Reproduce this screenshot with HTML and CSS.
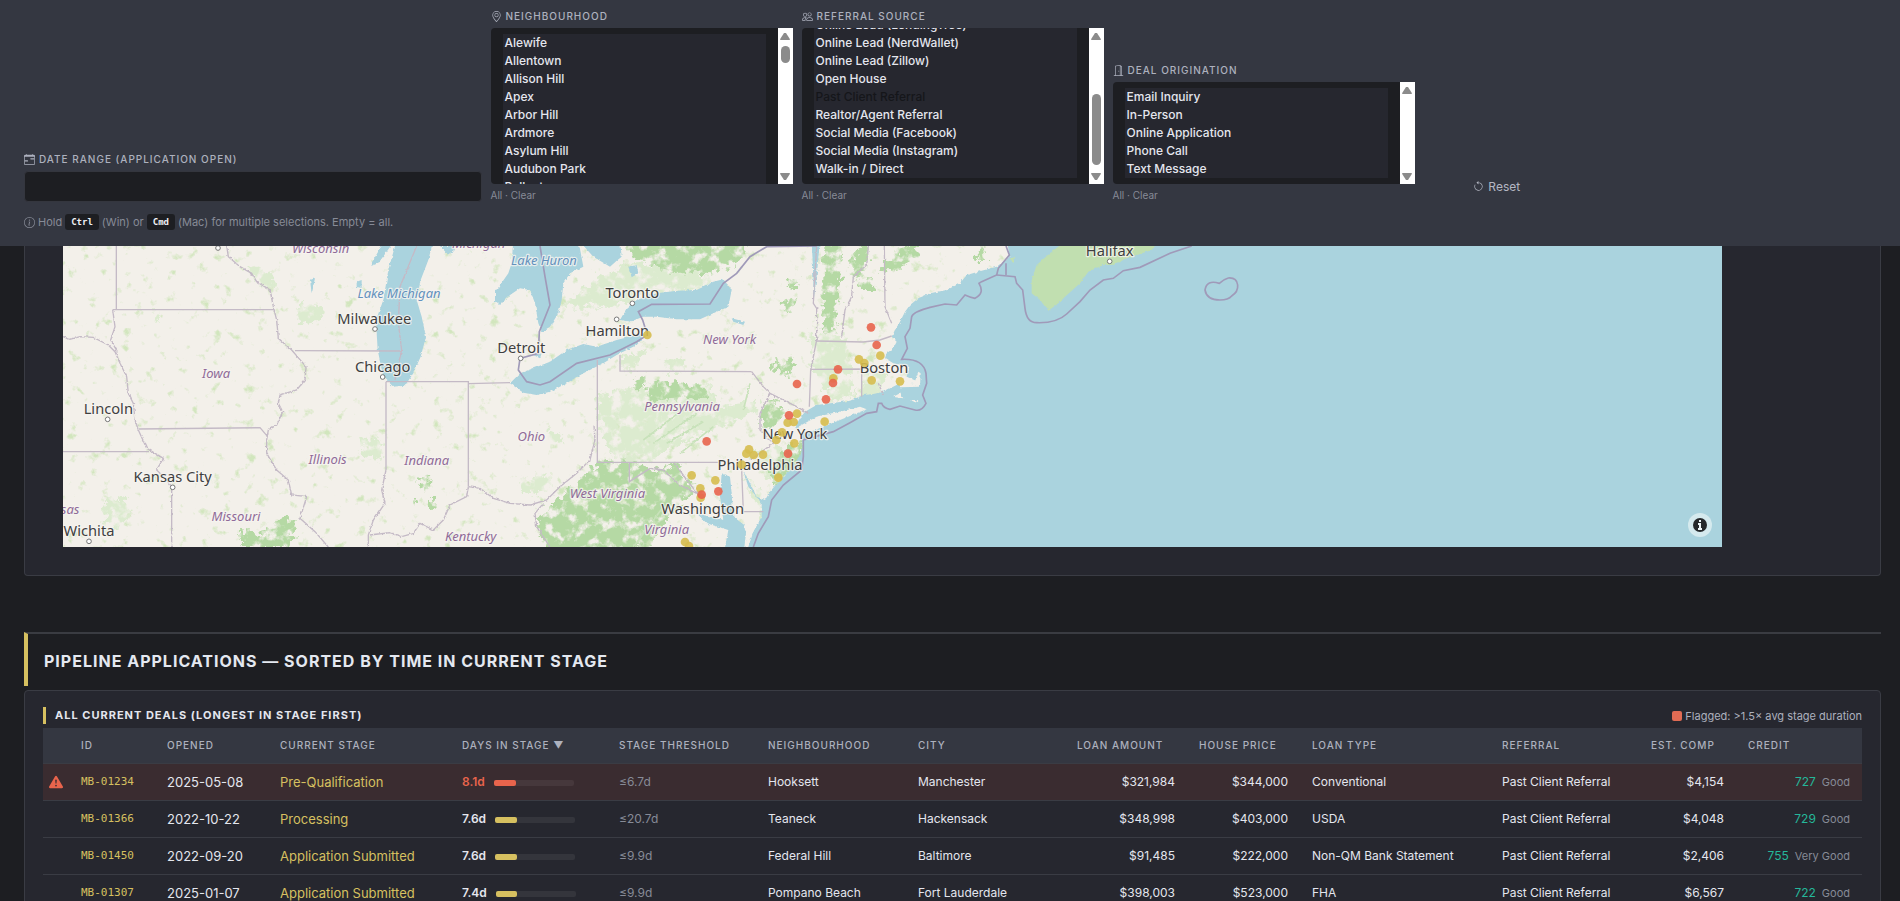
FILE: index.html
```html
<!DOCTYPE html>
<html lang="en">
<head>
  <meta charset="UTF-8">
  <meta name="viewport" content="width=device-width, initial-scale=1.0">
  <title>Mortgage Pipeline Dashboard</title>
  <link rel="stylesheet" href="styles.css">
</head>
<body>

  <!-- Filters -->
  <header class="filter-bar">
    <div class="filter-grid">
      <div class="field field-date">
        <label for="date-range">
          <svg class="icon" viewBox="0 0 16 16"><path d="M9 7a1 1 0 0 1 1-1h5v2h-5a1 1 0 0 1-1-1M1 9h4a1 1 0 0 1 0 2H1z"/><path d="M3.500 0a.5.5 0 0 1 .5.5V1h8V.5a.5.5 0 0 1 1 0V1h1a2 2 0 0 1 2 2v11a2 2 0 0 1-2 2H2a2 2 0 0 1-2-2V3a2 2 0 0 1 2-2h1V.5a.5.5 0 0 1 .5-.5M1 4v10a1 1 0 0 0 1 1h12a1 1 0 0 0 1-1V4z"/></svg>
          Date range (application open)
        </label>
        <input type="text" id="date-range">
      </div>

      <div class="field">
        <label for="neighbourhood">
          <svg class="icon" viewBox="0 0 16 16"><path d="M12.166 8.94c-.524 1.062-1.234 2.12-1.96 3.07A32 32 0 0 1 8 14.58a32 32 0 0 1-2.206-2.57c-.726-.95-1.436-2.008-1.96-3.07C3.304 7.867 3 6.862 3 6a5 5 0 0 1 10 0c0 .862-.305 1.867-.834 2.94M8 16s6-5.686 6-10A6 6 0 0 0 2 6c0 4.314 6 10 6 10"/><path d="M8 8a2 2 0 1 1 0-4 2 2 0 0 1 0 4m0 1a3 3 0 1 0 0-6 3 3 0 0 0 0 6"/></svg>
          Neighbourhood
        </label>
        <div class="list-box">
          <select id="neighbourhood" class="list tall" multiple></select>
          <span class="scrollbar"><i class="up"></i><i class="thumb thumb-top"></i><i class="down"></i></span>
        </div>
        <div class="links"><a href="#">All</a> · <a href="#">Clear</a></div>
      </div>

      <div class="field">
        <label for="referral">
          <svg class="icon" viewBox="0 0 16 16"><path d="M15 14s1 0 1-1-1-4-5-4-5 3-5 4 1 1 1 1zm-7.978-1L7 12.996c.001-.264.167-1.03.76-1.72C8.312 10.629 9.282 10 11 10c1.717 0 2.687.63 3.24 1.276.593.69.758 1.457.76 1.72l-.008.002-.014.002zM11 7a2 2 0 1 0 0-4 2 2 0 0 0 0 4m3-2a3 3 0 1 1-6 0 3 3 0 0 1 6 0M6.936 9.28a6 6 0 0 0-1.23-.247A7 7 0 0 0 5 9c-4 0-5 3-5 4q0 1 1 1h4.216A2.24 2.24 0 0 1 5 13c0-1.01.377-2.042 1.09-2.904.243-.294.526-.569.846-.816M4.920 10A5.500 5.500 0 0 0 4 13H1c0-.26.164-1.03.76-1.724.545-.636 1.492-1.256 3.160-1.275ZM1.500 5.500a3 3 0 1 1 6 0 3 3 0 0 1-6 0m3-2a2 2 0 1 0 0 4 2 2 0 0 0 0-4"/></svg>
          Referral source
        </label>
        <div class="list-box">
          <select id="referral" class="list tall" multiple></select>
          <span class="scrollbar"><i class="up"></i><i class="thumb thumb-bottom"></i><i class="down"></i></span>
        </div>
        <div class="links"><a href="#">All</a> · <a href="#">Clear</a></div>
      </div>

      <div class="field">
        <label for="origination">
          <svg class="icon" viewBox="0 0 16 16"><path d="M8.500 10c-.276 0-.5-.448-.5-1s.224-1 .5-1 .5.448.5 1-.224 1-.5 1"/><path d="M10.828.122A.5.5 0 0 1 11 .5V1h.5A1.500 1.500 0 0 1 13 2.500V15h1.500a.5.5 0 0 1 0 1h-13a.5.5 0 0 1 0-1H3V1.500a.5.5 0 0 1 .43-.495l7-1a.5.5 0 0 1 .398.117M11.500 2H11v13h1V2.500a.5.5 0 0 0-.5-.5M4 1.934V15h6V1.077z"/></svg>
          Deal origination
        </label>
        <div class="list-box">
          <select id="origination" class="list short" multiple></select>
          <span class="scrollbar"><i class="up"></i><i class="down"></i></span>
        </div>
        <div class="links"><a href="#">All</a> · <a href="#">Clear</a></div>
      </div>

      <button class="reset" type="button">
        <svg class="icon" viewBox="0 0 16 16"><path d="M8 3a5 5 0 1 1-4.546 2.914.5.5 0 0 0-.908-.417A6 6 0 1 0 8 2z"/><path d="M8 4.466V.534a.25.25 0 0 0-.41-.192L5.230 2.308a.25.25 0 0 0 0 .384l2.360 1.966A.25.25 0 0 0 8 4.466"/></svg>
        Reset
      </button>
    </div>
    <p class="hint">
      <svg class="icon" viewBox="0 0 16 16"><path d="M8 15A7 7 0 1 1 8 1a7 7 0 0 1 0 14m0 1A8 8 0 1 0 8 0a8 8 0 0 0 0 16"/><path d="m8.930 6.588-2.290.287-.082.38.45.083c.294.07.352.176.288.469l-.738 3.468c-.194.897.105 1.319.808 1.319.545 0 1.178-.252 1.465-.598l.088-.416c-.2.176-.492.246-.686.246-.275 0-.375-.193-.304-.533zM9 4.500a1 1 0 1 1-2 0 1 1 0 0 1 2 0"/></svg>
      Hold <kbd>Ctrl</kbd> (Win) or <kbd>Cmd</kbd> (Mac) for multiple selections. Empty = all.
    </p>
  </header>

  <main class="content">

    <!-- Deal map -->
    <section class="card map-card">
      <div class="map">
        <svg class="map-canvas" viewBox="189 18 4977 903" preserveAspectRatio="xMidYMid slice">
          <defs>
            <filter id="rough" x="-2%" y="-2%" width="104%" height="104%">
              <feTurbulence type="fractalNoise" baseFrequency=".09" numOctaves="3" seed="4"/>
              <feDisplacementMap in="SourceGraphic" scale="9" xChannelSelector="R" yChannelSelector="G"/>
            </filter>
            <filter id="woods" x="-5%" y="-5%" width="110%" height="110%" color-interpolation-filters="sRGB">
              <feTurbulence type="fractalNoise" baseFrequency=".05" numOctaves="4" seed="9"/>
              <feDisplacementMap in="SourceGraphic" scale="50" xChannelSelector="R" yChannelSelector="G" result="shape"/>
              <feTurbulence type="fractalNoise" baseFrequency=".03" numOctaves="4" seed="14"/>
              <feColorMatrix values="0 0 0 0 1  0 0 0 0 1  0 0 0 0 1  5 0 0 0 -1.500" result="patches"/>
              <feComposite in="shape" in2="patches" operator="in"/>
            </filter>
            <filter id="speckle" x="0" y="0" width="100%" height="100%" color-interpolation-filters="sRGB">
              <feTurbulence type="fractalNoise" baseFrequency=".03" numOctaves="4" seed="21"/>
              <feColorMatrix values="0 0 0 0 .82  0 0 0 0 .90  0 0 0 0 .74  5 0 0 0 -3.150"/>
            </filter>
          </defs>

          <rect class="land" x="189" y="18" width="4977" height="903"/>
          <rect class="speckles" x="189" y="18" width="2900" height="903" filter="url(#speckle)"/>

          <g class="forest light" filter="url(#woods)">
            <path d="M740,90 780,80 825,120 820,150 780,140Z M890,200 960,190 970,240 900,250Z M320,770 380,780 390,830 350,860 310,850Z M450,210 480,210 470,250Z M1080,590 1140,600 1150,660 1090,650Z"/>
            <path d="M1690,200 1800,110 1880,70 2060,90 2160,120 2100,150 1950,160 1850,200Z M1860,350 1940,330 1900,390 1870,395Z M1990,360 2050,350 2050,395 2000,395Z"/>
            <path d="M1560,720 1640,700 1660,745 1570,760Z M1640,570 1680,580 1690,610 1650,610Z M1790,460 2130,430 2160,500 2280,480 2260,520 2060,600 1900,690 1830,640 1800,560Z"/>
            <path d="M2430,280 2540,290 2560,470 2500,480 2440,400Z M2580,390 2660,400 2640,470 2590,470Z M2250,640 2340,620 2370,690 2300,720Z M2230,700 2290,760 2310,900 2280,850Z"/>
          </g>
          <g class="forest" filter="url(#woods)">
            <path d="M720,870 790,880 850,830 890,850 870,921 720,921Z M1255,720 1295,710 1290,755 1260,750Z M1290,780 1310,780 1310,810 1290,815Z M1240,780 1250,780 1245,800Z"/>
            <path d="M1840,-20 2250,-20 2220,60 2130,100 2010,95 1900,50Z"/>
            <path d="M1900,420 1935,410 1930,450 1905,450Z M1940,430 2010,425 2110,440 2130,475 2050,470 1950,485Z"/>
            <path d="M1615,830 1720,740 1800,660 1890,665 1960,690 2040,670 2070,735 2010,790 1940,880 1880,960 1650,960 1610,860Z"/>
            <path d="M1960,840 2040,760 2070,720 2080,760 2010,830 1920,960 1890,960Z"/>
            <path d="M2470,-10 2530,-10 2520,120 2500,290 2465,280 2470,150Z M2555,50 2600,0 2610,60 2570,120 2550,110Z M2575,120 2620,110 2620,150 2580,150Z M2640,80 2740,0 2760,30 2700,90 2650,95Z M2355,115 2395,110 2390,150 2360,140Z M2350,180 2385,170 2370,215 2345,195Z M2320,370 2380,360 2375,400 2320,395Z M2290,500 2330,470 2350,530 2300,580 2280,550Z M2925,30 2950,18 2955,60 2930,60Z M2340,640 2420,590 2400,680 2330,740 2310,710Z"/>
          </g>
          <g class="ridge" filter="url(#rough)">
            <path d="M1930,600 2060,500 M1960,610 2090,520 M2000,610 2110,545 M2040,640 2140,560 M1990,800 1900,921 M2250,430 2230,510"/>
          </g>

          <g class="water" filter="url(#rough)">
            <path d="M1190,0 1165,90 1150,180 1128,240 1133,330 1150,410 1180,440 1215,437 1240,400 1262,350 1278,290 1265,230 1250,180 1262,120 1285,60 1300,0Z"/>
            <path d="M1155,0 1120,60 1113,78 1135,70 1185,0Z M1320,18 1345,45 1365,30 1360,18Z M1485,150 1505,145 1505,190 1485,185Z M1070,125 1085,120 1085,145 1070,140Z M930,120 945,115 935,160Z"/>
            <path d="M1540,0 1535,70 1525,100 1490,150 1485,180 1500,195 1530,165 1560,145 1590,150 1605,190 1615,250 1625,275 1650,260 1675,220 1685,180 1690,130 1710,100 1750,80 1735,0Z"/>
            <path d="M1735,0 1780,50 1830,80 1850,62 1865,50 1860,0Z M1885,80 1910,75 1915,100 1895,112Z M1600,345 1625,340 1620,355Z"/>
            <path d="M1530,430 1560,400 1600,385 1650,365 1700,330 1750,312 1790,320 1850,300 1910,285 1940,282 1910,315 1850,345 1810,370 1750,400 1700,430 1650,455 1610,465 1570,458Z"/>
            <path d="M1860,240 1880,205 1910,180 1970,160 2030,152 2090,150 2140,125 2170,118 2195,150 2185,200 2150,215 2100,238 2030,238 1970,230 1930,230 1890,245Z"/>
            <path d="M2435,0 2460,0 2450,110 2440,190 2440,110Z M2195,235 2235,245 2230,255 2200,245Z"/>
            <path d="M5230,-10 3020,-10 3028,50 2990,80 2945,92 2900,105 2880,130 2840,150 2790,160 2755,175 2730,195 2715,215 2700,245 2685,270 2675,290 2690,305 2680,325 2660,340 2655,355 2680,370 2725,380 2720,410 2755,425 2750,432 2700,430 2650,455 2620,462 2590,465 2550,482 2450,495 2415,515 2400,535 2385,560 2405,590 2408,620 2400,650 2370,690 2335,725 2310,755 2295,780 2270,770 2240,710 2230,695 2245,740 2285,790 2285,830 2262,870 2235,950 5230,950Z"/>
            <path d="M2165,700 2190,710 2195,760 2200,830 2240,860 2230,950 2170,950 2185,870 2120,850 2090,820 2170,840 2160,770Z"/>
          </g>

          <g class="land" filter="url(#rough)">
            <path d="M2395,560 2450,530 2520,515 2580,500 2600,508 2520,540 2440,572 2400,580Z"/>
            <path d="M2690,415 2740,432 2755,395 2762,400 2760,440 2700,442Z M2680,470 2700,460 2710,475Z M2730,480 2755,480 2750,488Z"/>
            <path d="M2225,720 2260,780 2280,800 2275,850 2250,890 2235,870 2225,800Z"/>
          </g>
          <path class="scotia" filter="url(#rough)" d="M3200,0 3150,40 3110,75 3095,120 3095,160 3120,180 3145,212 3175,190 3195,170 3240,130 3265,95 3310,75 3340,75 3380,55 3455,30 3480,0Z M3030,55 3045,50 3040,70Z"/>

          <!-- state lines -->
          <g class="state-line">
            <path d="M349,18V208 M338,209H822 M415,567 780,563 803,590 M189,635H447 M885,332 1200,333 M1158,425H1405V740 M1158,425V690 M1405,431 1530,428 M1792,360V667H2155 M1860,345V393L2255,395 M2432,390 2428,500 M2432,388 2585,387V470 M2450,303 2590,306 2640,300 2675,288 M1888,667V725L1950,685 M2225,690 2230,815H2290"/>
            <path filter="url(#rough)" d="M338,209 345,260 332,300 352,335 M189,290 210,298 240,290 280,292 325,315 345,335 360,370 380,410 385,460 400,490 405,540 415,570 440,625 490,655 470,690 500,720 515,740V921"/>
            <path filter="url(#rough)" d="M680,18 685,50 720,80 755,100 770,125 810,150 820,200 830,240 835,295 875,330 918,380 915,420 890,450 840,465 835,490 848,515 830,555 805,570 800,600 800,640 830,690 865,720 875,765 920,770 900,835 945,875 985,921"/>
            <path filter="url(#rough)" d="M1158,690 1145,750 1155,790 1120,840 1105,885V921 M1110,885 1170,878 1205,890 1240,880 1260,850 1300,870 1330,840 1350,795 1400,770 1405,740 1440,745 1480,775 1530,790 1590,795 1640,780 1680,740 1730,700 1770,660 1785,600 1782,560 M1630,790 1605,820 1610,860 1650,921"/>
            <path filter="url(#rough)" d="M2255,395 2290,440 2310,460 2280,520 2280,570 2320,610 2250,660 M2310,460 2390,500 2425,520 M2450,18 2445,100 2440,190 2450,205V300L2432,390 M2605,18 2600,75 2560,110 2555,170 2535,210 2525,290 M2653,18 2655,200 2675,250 M2635,430 2650,465 M1950,685 1990,690 2040,735 2090,760 M2025,670 2060,720 2100,770 M1250,18 1200,140 1195,250 1205,330 1185,420"/>
          </g>

          <!-- national border and territorial waters -->
          <g class="sea-line">
            <path d="M1620,18 1635,110 1650,195 1618,275 1615,340 1560,355 1555,390 1580,425 1620,435 1650,425 1730,370 1830,345 1910,305 1942,285 1928,240 1915,215 1955,193 2130,192 2170,130 2210,100 2250,50 2300,20 2450,18"/>
            <path d="M3018,18 3028,45 2995,85 2990,105 2945,125 2937,130Q2955,160 2925,175 2910,172 2895,165L2870,195 2835,192 2790,202Q2740,215 2735,230L2730,265 2715,290 2722,325 2705,358Q2770,355 2778,400 L2780,430 2768,465 2778,490Q2765,515 2745,510L2700,498 2670,508Q2650,505 2645,490L2635,490 2630,515 2600,520 2550,548 2500,575 2410,600V650L2405,690 2350,735 2315,780 2305,830 2275,880 2260,921"/>
            <path d="M2990,105 3045,110 3050,130 3068,150 3075,205Q3080,248 3110,248 3170,250 3200,222L3240,185 3270,150 3310,120 3340,115 3370,92 3420,82 3510,40 3575,18 M3018,70V105"/>
            <path d="M3658,130Q3620,118 3615,150 3620,180 3660,180 3685,180 3695,168 3715,155 3713,135 3710,112 3685,114 3670,118 3658,130Z"/>
          </g>

          <g class="town">
            <circle cx="654" cy="24" r="7"/><circle cx="1125" cy="267" r="7"/><circle cx="1148" cy="411" r="7"/><circle cx="323" cy="538" r="7"/><circle cx="518" cy="742" r="7"/><circle cx="267" cy="904" r="7"/><circle cx="1562" cy="355" r="7"/><circle cx="1897" cy="190" r="7"/><circle cx="1850" cy="238" r="7"/><circle cx="3329" cy="64" r="7"/>
          </g>

          <g class="region">
            <text x="962" y="39">Wisconsin</text>
            <text x="1436" y="24">Michigan</text>
            <text x="648" y="414">Iowa</text>
            <text x="983" y="673">Illinois</text>
            <text x="1280" y="674">Indiana</text>
            <text x="708" y="843">Missouri</text>
            <text x="177" y="822">Kansas</text>
            <text x="1412" y="902">Kentucky</text>
            <text x="1594" y="603">Ohio</text>
            <text x="1822" y="775">West Virginia</text>
            <text x="2000" y="881">Virginia</text>
            <text x="2046" y="514">Pennsylvania</text>
            <text x="2189" y="311">New York</text>
          </g>
          <g class="region lake">
            <text x="1197" y="174">Lake Michigan</text>
            <text x="1632" y="75">Lake Huron</text>
          </g>
          <g class="city">
            <text x="1123" y="251">Milwaukee</text>
            <text x="1148" y="395">Chicago</text>
            <text x="325" y="523">Lincoln</text>
            <text x="518" y="725">Kansas City</text>
            <text x="267" y="888">Wichita</text>
            <text x="1564" y="338">Detroit</text>
            <text x="1897" y="174">Toronto</text>
            <text x="1852" y="287">Hamilton</text>
            <text x="2652" y="398">Boston</text>
            <text x="2385" y="597">New York</text>
            <text x="2280" y="690">Philadelphia</text>
            <text x="2108" y="822">Washington</text>
            <text x="3329" y="48">Halifax</text>
          </g>

          <g id="deal-dots"></g>
        </svg>
        <button class="attribution" type="button" aria-label="Map attribution">
          <svg viewBox="0 0 24 24"><circle cx="12" cy="12" r="7"/><path d="M12 7v2M10 11h2v5M10 16h4"/></svg>
        </button>
      </div>
    </section>

    <h2 class="section-title">Pipeline applications — sorted by time in current stage</h2>

    <!-- Deals table -->
    <section class="card table-card">
      <div class="card-head">
        <h3>All current deals (longest in stage first)</h3>
        <span class="legend"><i class="swatch"></i>Flagged: &gt;1.5× avg stage duration</span>
      </div>
      <table class="deals">
        <colgroup>
          <col class="c-flag"><col class="c-id"><col class="c-opened"><col class="c-stage"><col class="c-days"><col class="c-limit"><col class="c-hood"><col class="c-city"><col class="c-loan"><col class="c-price"><col class="c-type"><col class="c-ref"><col class="c-comp"><col class="c-credit">
        </colgroup>
        <thead>
          <tr>
            <th></th>
            <th>ID</th>
            <th>Opened</th>
            <th>Current stage</th>
            <th>Days in stage ▼</th>
            <th>Stage threshold</th>
            <th>Neighbourhood</th>
            <th>City</th>
            <th>Loan amount</th>
            <th>House price</th>
            <th>Loan type</th>
            <th>Referral</th>
            <th>Est. comp</th>
            <th>Credit</th>
          </tr>
        </thead>
        <tbody id="deal-rows"></tbody>
      </table>
    </section>
  </main>

  <script src="script.js"></script>
</body>
</html>
```
FILE: styles.css
```css
* {
  box-sizing: border-box;
}

body {
  height: 100vh;
  margin: 0;
  overflow: hidden;
  background-color: #1d1e22;
  color: #e4e6ee;
  font-family: Inter, sans-serif;
  font-size: 12px;
}

a {
  color: inherit;
  text-decoration: none;
}

.icon {
  width: 11px;
  height: 11px;
  fill: currentColor;
  flex: none;
}

/* Filters */
.filter-bar {
  padding: 8px 19px 14px 24px;
  background-color: #343741;
}

.filter-grid {
  display: grid;
  grid-template-columns: repeat(12, 1fr);
  gap: 9px;
  align-items: end;
}

.field {
  grid-column: span 2;
  min-width: 0;
}

.field-date {
  grid-column: span 3;
}

.field label {
  display: flex;
  align-items: center;
  gap: 4px;
  height: 16px;
  margin-bottom: 4px;
  color: #adb1be;
  font-size: 10px;
  font-weight: 500;
  letter-spacing: 1px;
  text-transform: uppercase;
}

.field input {
  display: block;
  width: 100%;
  height: 31px;
  border: 1px solid #34363e;
  border-radius: 4px;
  background-color: #1d1e22;
  color: #e4e6ee;
}

.list-box {
  position: relative;
}

.list {
  display: block;
  width: 100%;
  padding: 6px 27px 6px 12px;
  border: 0;
  border-radius: 4px 0 0 4px;
  outline: 0;
  background-color: #1d1e22;
  color: #e4e6ee;
  font-family: inherit;
  font-size: 12px;
  overflow-y: scroll;
  scrollbar-width: none;
}

.tall {
  height: 156px;
}

.short {
  height: 102px;
}

.list option {
  height: 18px;
  min-height: 18px;
  padding: 1px 2px 0;
  background-color: #26272f;
  font-weight: 500;
  line-height: 18px;
}

.list option:checked {
  background: #26272f linear-gradient(#26272f, #26272f);
  color: #15161a;
}

/* scrollbar laid over the right edge of a list */
.scrollbar {
  position: absolute;
  top: 0;
  right: 0;
  bottom: 0;
  display: flex;
  flex-direction: column;
  align-items: center;
  width: 15px;
  padding: 5px 0 4px;
  background-color: #fff;
  pointer-events: none;
}

.up,
.down {
  width: 10px;
  height: 7px;
  background-color: #8b8b8b;
  clip-path: polygon(40% 0, 60% 0, 100% 90%, 95% 100%, 5% 100%, 0 90%);
}

.down {
  margin-top: auto;
  transform: rotate(180deg);
}

.thumb {
  width: 9px;
  border-radius: 5px;
  background-color: #8b8b8b;
}

.thumb-top {
  height: 17px;
  margin-top: 6px;
}

.thumb-bottom {
  height: 71px;
  margin: auto 0 8px;
}

.thumb-bottom + .down {
  margin-top: 0;
}

.links {
  margin-top: 4px;
  color: #878b97;
  font-size: 10px;
  line-height: 14px;
}

.reset {
  display: flex;
  align-items: center;
  justify-content: center;
  gap: 4px;
  height: 31px;
  padding: 0;
  border: 0;
  background: none;
  color: #b4b7c3;
  font-family: inherit;
  font-size: 12px;
  cursor: pointer;
}

.hint {
  display: flex;
  align-items: center;
  gap: 3px;
  height: 20px;
  margin: 10px 0 0;
  color: #878b97;
  font-size: 11px;
}

kbd {
  padding: 0 6px;
  border-radius: 3px;
  background-color: #1d1e22;
  color: #f0f1f5;
  font-family: "DejaVu Sans Mono", monospace;
  font-size: 9px;
  font-weight: bold;
  line-height: 16px;
}

/* Cards */
.content {
  padding: 0 19px 0 24px;
}

.card {
  border: 1px solid #3a3c44;
  border-radius: 4px;
  background-color: #26272f;
}

.map-card {
  padding: 0 158px 28px 38px;
  border-top: 0;
  border-radius: 0 0 4px 4px;
}

/* Map */
.map {
  position: relative;
}

.map-canvas {
  display: block;
  width: 100%;
  height: 301px;
  overflow: hidden;
}

.land {
  fill: #f3f0ea;
}

.forest {
  fill: #b5d9a4;
}

.light {
  fill: #dcebcf;
}

.ridge {
  fill: none;
  stroke: #c8e2ba;
  stroke-width: 5;
}

.water {
  fill: #aad3de;
}

.scotia {
  fill: #c1dfb0;
}

.state-line {
  fill: none;
  stroke: #c4bac6;
  stroke-width: 4;
}

.sea-line {
  fill: none;
  stroke: #a09ab9;
  stroke-width: 5;
}

.town {
  fill: #fff;
  stroke: #777;
  stroke-width: 3;
}

.map text {
  font-family: "Noto Sans", sans-serif;
  text-anchor: middle;
  paint-order: stroke;
  stroke: #f7f5f1;
  stroke-opacity: 0.8;
  stroke-width: 7;
  stroke-linejoin: round;
}

.region text {
  fill: #8f6b98;
  font-size: 39px;
  font-style: italic;
}

.lake text {
  fill: #6391bd;
}

.city text {
  fill: #3f3f3f;
  font-size: 44px;
}

.dot {
  fill: #d6bd4f;
  fill-opacity: 0.9;
}

.dot.flagged {
  fill: #e8644c;
}

.attribution {
  position: absolute;
  right: 10px;
  bottom: 10px;
  width: 24px;
  height: 24px;
  padding: 0;
  border: 0;
  border-radius: 12px;
  background-color: #d5eaee;
}

.attribution svg {
  display: block;
  fill: #25282a;
}

.attribution path {
  fill: none;
  stroke: #eef6f8;
  stroke-width: 2;
}

/* Section heading */
.section-title {
  height: 54px;
  margin: 56px 0 4px;
  padding-left: 16px;
  border-top: 2px solid #3a3c42;
  border-left: 4px solid #d6c060;
  color: #e4e8f0;
  font-size: 16px;
  font-weight: 700;
  letter-spacing: 1px;
  line-height: 54px;
  text-transform: uppercase;
  white-space: nowrap;
}

/* Deals table */
.table-card {
  padding: 16px 18px;
}

.card-head {
  display: flex;
  align-items: center;
  justify-content: space-between;
  height: 17px;
  margin-bottom: 4px;
}

.card-head h3 {
  margin: 0;
  padding-left: 9px;
  border-left: 3px solid #d6c060;
  font-size: 11px;
  font-weight: 700;
  letter-spacing: 1px;
  line-height: 17px;
  text-transform: uppercase;
}

.legend {
  display: flex;
  align-items: center;
  gap: 3px;
  color: #adb1be;
  font-size: 11px;
  line-height: 16px;
}

.swatch {
  width: 10px;
  height: 10px;
  border-radius: 2px;
  background-color: #e06b54;
}

.deals {
  width: 100%;
  table-layout: fixed;
  border-collapse: collapse;
}

.c-flag { width: 26px; }
.c-id { width: 86px; }
.c-opened { width: 113px; }
.c-stage { width: 182px; }
.c-days { width: 157px; }
.c-limit { width: 149px; }
.c-hood { width: 150px; }
.c-city { width: 159px; }
.c-loan { width: 122px; }
.c-price { width: 113px; }
.c-type { width: 190px; }
.c-ref { width: 149px; }
.c-comp { width: 97px; }
.c-credit { width: 126px; }

.deals th,
.deals td {
  height: 37px;
  padding: 0 12px;
  border-bottom: 1px solid #3a3c44;
  text-align: left;
  white-space: nowrap;
}

.deals th {
  height: 35px;
  background-color: #343741;
  color: #adb1be;
  font-size: 10px;
  font-weight: 500;
  letter-spacing: 1px;
  text-transform: uppercase;
}

.deals tr.flagged {
  background-color: #3a2c30;
}

.deals td.flag {
  padding: 0 0 0 6px;
}

.flag svg {
  display: block;
  width: 14px;
  height: 14px;
  fill: #e8644c;
}

.deals .id {
  color: #d6c060;
  font-family: "DejaVu Sans Mono", monospace;
  font-size: 11px;
}

.deals .opened {
  font-size: 13px;
}

.deals .stage {
  color: #d6c060;
  font-size: 13px;
}

.days b {
  font-weight: 600;
}

.flagged .days b {
  color: #e8644c;
}

.track {
  display: inline-block;
  width: 80px;
  height: 6px;
  margin-left: 9px;
  border-radius: 2px;
  background-color: #34353c;
  vertical-align: middle;
}

.flagged .track {
  background-color: #46383c;
}

.fill {
  display: block;
  height: 6px;
  border-radius: 2px;
  background-color: #d6c060;
}

.flagged .fill {
  background-color: #e8644c;
}

.deals .limit {
  color: #878b97;
}

.deals .num {
  text-align: right;
}

.score {
  margin-right: 6px;
  color: #25b79a;
}

.grade {
  color: #878b97;
  font-size: 11px;
}
```
FILE: script.js
```js
const lists = {
  neighbourhood: ["Alewife", "Allentown", "Allison Hill", "Apex", "Arbor Hill", "Ardmore", "Asylum Hill", "Audubon Park", "Ballantyne", "Bay Ridge", "Beacon Hill", "Bethesda", "Brookline", "Brighton", "Brooklyn", "Cambridge", "Camden", "Canton", "Chelsea", "Cherry Hill", "Clifton", "Dorchester", "Downtown", "East End", "Edison", "Federal Hill", "Fells Point", "Fishtown", "Flatbush", "Georgetown", "Hamden", "Harlem", "Hoboken", "Hooksett", "Jamaica Plain", "Kenmore", "Lakewood", "Manayunk", "Medford", "Nashua"],
  referral: ["Builder Referral", "Direct Mail", "Financial Advisor", "Networking Event", "Online Lead (Bankrate)", "Online Lead (LendingTree)", "Online Lead (NerdWallet)", "Online Lead (Zillow)", "Open House", "Past Client Referral", "Realtor/Agent Referral", "Social Media (Facebook)", "Social Media (Instagram)", "Walk-in / Direct"],
  origination: ["Email Inquiry", "In-Person", "Online Application", "Phone Call", "Text Message"]
};

for (const id in lists) {
  const select = document.getElementById(id);
  select.innerHTML = lists[id].map(name => `<option>${name}</option>`).join("");
}

const referral = document.getElementById("referral");
referral.options[9].selected = true;
referral.scrollTop = referral.scrollHeight;

// map markers: x, y, flagged
const dots = [
  [1942, 285, 0], [2577, 358, 0], [2593, 369, 0], [2641, 347, 0], [2615, 421, 0], [2700, 424, 0],
  [2500, 415, 0], [2391, 521, 0], [2363, 548, 0], [2381, 546, 0], [2474, 545, 0], [2346, 577, 0],
  [2329, 600, 0], [2383, 610, 0], [2247, 628, 0], [2239, 641, 0], [2261, 645, 0], [2289, 644, 0],
  [2225, 674, 0], [2335, 713, 0], [2075, 706, 0], [2146, 721, 0], [2101, 745, 0], [2102, 773, 0],
  [2055, 906, 0], [2067, 918, 0],
  [2613, 262, 1], [2630, 315, 1], [2514, 388, 1], [2499, 429, 1], [2391, 432, 1], [2478, 478, 1],
  [2367, 526, 1], [2120, 604, 1], [2364, 641, 1], [2155, 754, 1], [2105, 764, 1]
];

document.getElementById("deal-dots").innerHTML = dots.map(([x, y, flagged]) =>
  `<circle class="dot${flagged ? " flagged" : ""}" cx="${x}" cy="${y}" r="13"/>`
).join("");

const deals = [
  { id: "MB-01234", opened: "2025-05-08", stage: "Pre-Qualification", days: 8.1, limit: "6.7", hood: "Hooksett", city: "Manchester", loan: "$321,984", price: "$344,000", type: "Conventional", comp: "$4,154", score: 727, grade: "Good", flagged: true },
  { id: "MB-01366", opened: "2022-10-22", stage: "Processing", days: 7.6, limit: "20.7", hood: "Teaneck", city: "Hackensack", loan: "$348,998", price: "$403,000", type: "USDA", comp: "$4,048", score: 729, grade: "Good" },
  { id: "MB-01450", opened: "2022-09-20", stage: "Application Submitted", days: 7.6, limit: "9.9", hood: "Federal Hill", city: "Baltimore", loan: "$91,485", price: "$222,000", type: "Non-QM Bank Statement", comp: "$2,406", score: 755, grade: "Very Good" },
  { id: "MB-01307", opened: "2025-01-07", stage: "Application Submitted", days: 7.4, limit: "9.9", hood: "Pompano Beach", city: "Fort Lauderdale", loan: "$398,003", price: "$523,000", type: "FHA", comp: "$6,567", score: 722, grade: "Good" }
];

const warning = `<svg viewBox="0 0 16 16"><path d="M8.982 1.566a1.130 1.130 0 0 0-1.960 0L.165 13.233c-.457.778.091 1.767.98 1.767h13.713c.889 0 1.438-.99.98-1.767zM8 5c.535 0 .954.462.9.995l-.35 3.507a.552.552 0 0 1-1.100 0L7.100 5.995A.905.905 0 0 1 8 5m.002 6a1 1 0 1 1 0 2 1 1 0 0 1 0-2"/></svg>`;

document.getElementById("deal-rows").innerHTML = deals.map(d => `
  <tr class="${d.flagged ? "flagged" : ""}">
    <td class="flag">${d.flagged ? warning : ""}</td>
    <td class="id">${d.id}</td>
    <td class="opened">${d.opened}</td>
    <td class="stage">${d.stage}</td>
    <td class="days"><b>${d.days}d</b><span class="track"><span class="fill" style="width: ${Math.round(d.days * 3.5)}%"></span></span></td>
    <td class="limit">≤${d.limit}d</td>
    <td>${d.hood}</td>
    <td>${d.city}</td>
    <td class="num">${d.loan}</td>
    <td class="num">${d.price}</td>
    <td>${d.type}</td>
    <td>Past Client Referral</td>
    <td class="num">${d.comp}</td>
    <td class="num"><span class="score">${d.score}</span><span class="grade">${d.grade}</span></td>
  </tr>
`).join("");
```
